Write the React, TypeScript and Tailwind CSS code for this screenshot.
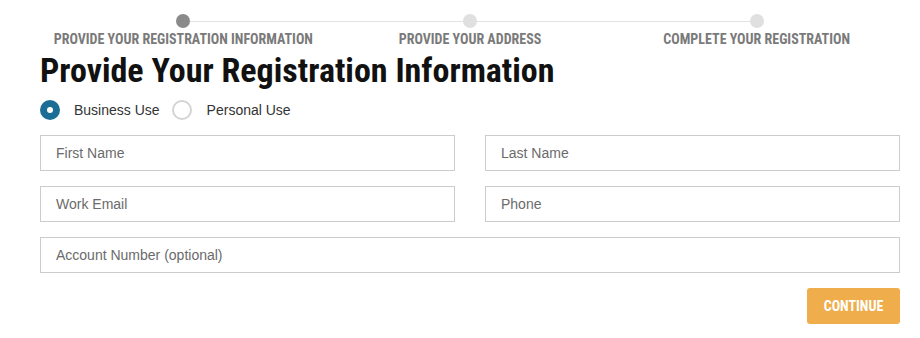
import React from "react"

const steps = [
  "Provide Your Registration Information",
  "Provide Your Address",
  "Complete Your Registration",
]

const Field = ({ placeholder, className = "" }: { placeholder: string; className?: string }) => (
  <input
    type="text"
    placeholder={placeholder}
    className={`h-9 w-full border border-[#cccccc] bg-white px-[15px] text-sm text-[#333] outline-none placeholder:text-[#6b6b6b] ${className}`}
  />
)

export default function App() {
  const [use, setUse] = React.useState<"business" | "personal">("business")

  return (
    <div className="bg-white pb-3 pl-10 pr-5 pt-[14px] font-['Liberation_Sans',Arial,sans-serif]">
      {/* stepper */}
      <div className="relative grid grid-cols-3">
        <div className="absolute left-[16.67%] right-[16.67%] top-[7px] h-px bg-[#e3e3e3]" />
        {steps.map((s, i) => (
          <div key={s} className="relative flex flex-col items-center">
            <span
              className={`h-[14px] w-[14px] rounded-full ${i === 0 ? "bg-[#8a8a8a]" : "bg-[#e0e0e0]"}`}
            />
            <span className="mt-[3px] font-['Roboto',sans-serif] text-sm font-bold uppercase leading-4 text-[#7a7a7a] [font-stretch:condensed]">
              {s}
            </span>
          </div>
        ))}
      </div>

      <h1 className="mt-[3px] font-['Roboto',sans-serif] text-[34px] font-bold leading-10 text-[#111] [font-stretch:condensed]">
        Provide Your Registration Information
      </h1>

      <div className="mt-[10px] flex items-center text-sm text-[#333]">
        <label className="flex cursor-pointer items-center" onClick={() => setUse("business")}>
          <span
            className={`flex h-5 w-5 items-center justify-center rounded-full ${
              use === "business" ? "bg-[#1b6d95]" : "border-2 border-[#d4d4d4]"
            }`}
          >
            {use === "business" && <span className="h-[6px] w-[6px] rounded-full bg-white" />}
          </span>
          <span className="ml-[14px]">Business Use</span>
        </label>
        <label className="ml-3 flex cursor-pointer items-center" onClick={() => setUse("personal")}>
          <span
            className={`flex h-5 w-5 items-center justify-center rounded-full ${
              use === "personal" ? "bg-[#1b6d95]" : "border-2 border-[#d4d4d4]"
            }`}
          >
            {use === "personal" && <span className="h-[6px] w-[6px] rounded-full bg-white" />}
          </span>
          <span className="ml-[15px]">Personal Use</span>
        </label>
      </div>

      <div className="mt-[15px] grid grid-cols-2 gap-x-[30px] gap-y-[15px]">
        <Field placeholder="First Name" />
        <Field placeholder="Last Name" />
        <Field placeholder="Work Email" />
        <Field placeholder="Phone" />
        <Field placeholder="Account Number (optional)" className="col-span-2" />
      </div>

      <div className="mt-[15px] flex justify-end">
        <button className="h-9 w-[93px] rounded-[3px] bg-[#efad4b] font-['Roboto',sans-serif] text-sm font-bold uppercase text-white [font-stretch:condensed]">
          Continue
        </button>
      </div>
    </div>
  )
}
